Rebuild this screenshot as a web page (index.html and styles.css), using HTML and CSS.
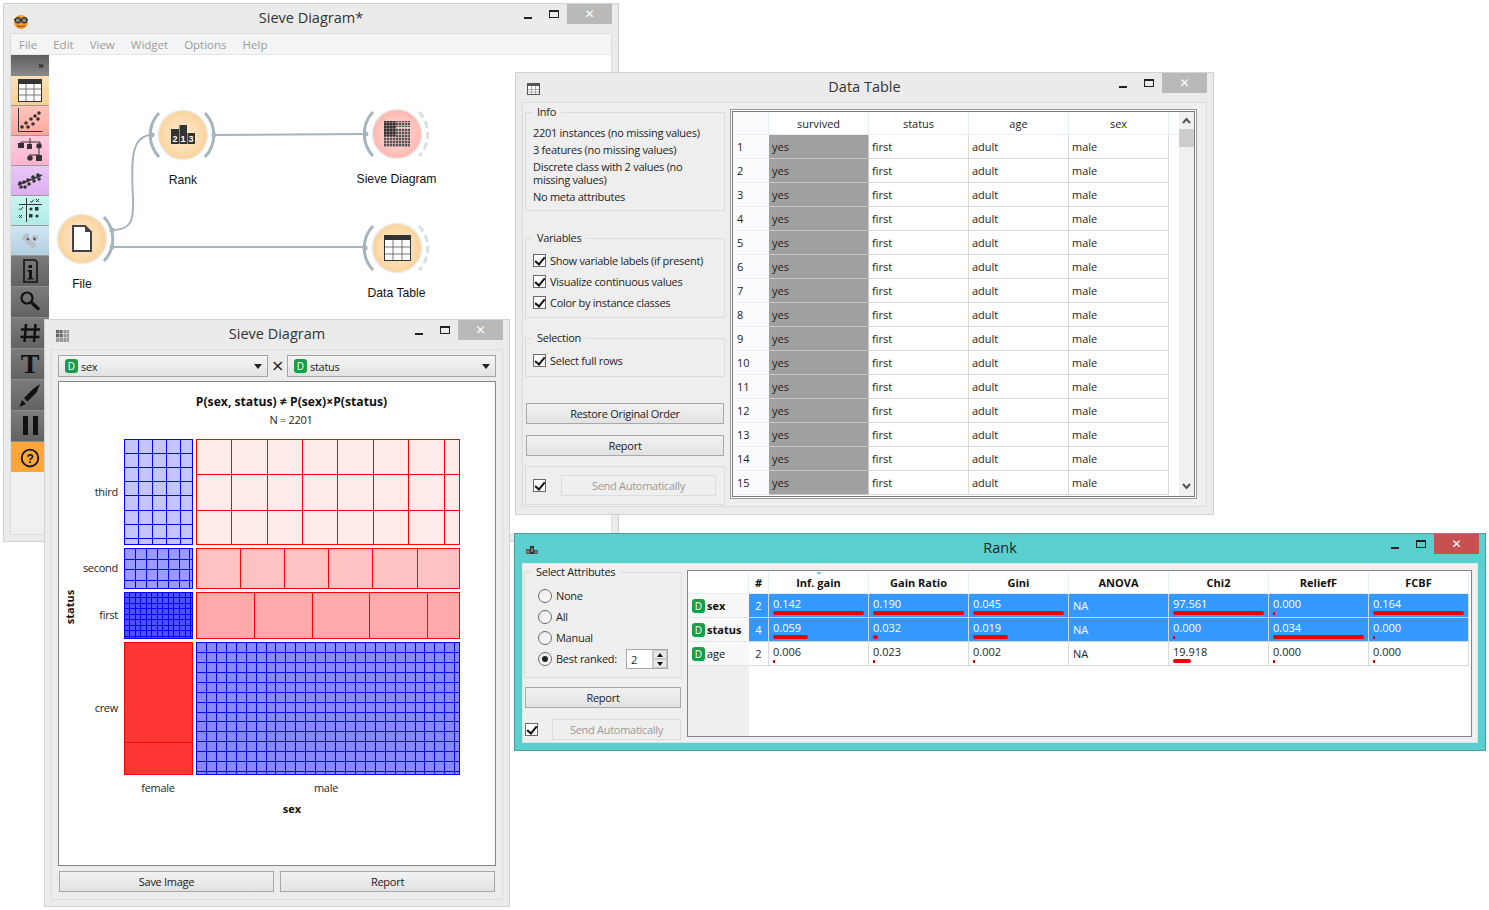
FILE: index.html
```html
<!DOCTYPE html>
<html lang="en">
<head>
<meta charset="utf-8">
<title>Sieve Diagram</title>
<link rel="stylesheet" href="styles.css">
</head>
<body>
<div class="desktop">

<!-- main canvas window -->
<section class="win win-main">
  <header class="titlebar">
    <div class="title-left">
      <svg class="face" width="16" height="15" viewBox="0 0 16 15"><circle cx="8" cy="8" r="7" fill="#f29a2e"/><path d="M4 11.500q4 2.500 8 0" stroke="#a84f0c" stroke-width="1.200" fill="none"/><path d="M1 5.500h14" stroke="#333" stroke-width="1.200"/><circle cx="4.800" cy="6.200" r="2.600" fill="#8a8a80" stroke="#333" stroke-width="1.200"/><circle cx="11.200" cy="6.200" r="2.600" fill="#8a8a80" stroke="#333" stroke-width="1.200"/></svg>
    </div>
    <h1 class="title">Sieve Diagram*</h1>
    <div class="controls"><span class="min"></span><span class="max"></span><span class="close">✕</span></div>
  </header>
  <div class="main-inner">
    <nav class="menubar"><span>File</span><span>Edit</span><span>View</span><span>Widget</span><span>Options</span><span>Help</span></nav>
    <div class="main-body">
      <aside class="toolbox">
        <div class="tool-head">»</div>
        <div class="tool t-data"><svg width="38" height="29" viewBox="0 0 38 29"><rect x="7.500" y="3.500" width="23" height="22" fill="#fff" stroke="#333"/><rect x="7" y="3" width="24" height="5" fill="#333"/><path d="M15 8v17M23 8v17M8 13h22M8 19h22" stroke="#777"/></svg></div>
        <div class="tool t-vis"><svg width="38" height="29" viewBox="0 0 38 29"><path d="M7.500 2v23.500h24" stroke="#333" fill="none"/><g fill="#333"><circle cx="11" cy="21" r="1.800"/><circle cx="15" cy="17" r="1.800"/><circle cx="17" cy="21" r="1.800"/><circle cx="20" cy="13" r="1.800"/><circle cx="22" cy="18" r="1.800"/><circle cx="24" cy="10" r="1.800"/><circle cx="27" cy="13" r="1.800"/><circle cx="28" cy="7" r="1.800"/></g></svg></div>
        <div class="tool t-model"><svg width="38" height="29" viewBox="0 0 38 29"><path d="M10 9V6h19v3M19 2v7M28 13v6h-10" stroke="#333" fill="none"/><g fill="#333"><rect x="7" y="7" width="6" height="5"/><rect x="16" y="8" width="5" height="5"/><circle cx="28" cy="10" r="2.700"/><circle cx="19" cy="22" r="2.700"/><rect x="25" y="19" width="6" height="6"/></g></svg></div>
        <div class="tool t-unsup"><svg width="38" height="29" viewBox="0 0 38 29"><path d="M7 19l24-10" stroke="#333" stroke-width="1.500"/><g fill="#333"><circle cx="9" cy="17" r="1.800"/><circle cx="10" cy="21" r="1.800"/><circle cx="14" cy="21" r="1.800"/><circle cx="13" cy="16" r="1.800"/><circle cx="17" cy="14" r="1.800"/><circle cx="18" cy="18" r="1.800"/><circle cx="22" cy="11" r="1.800"/><circle cx="23" cy="15" r="1.800"/><circle cx="27" cy="9" r="1.800"/><circle cx="28" cy="13" r="1.800"/></g></svg></div>
        <div class="tool t-eval"><svg width="38" height="29" viewBox="0 0 38 29"><path d="M8 8.500h23M15.500 2v24" stroke="#333"/><path d="M19 5l1.500 1.500L23 3.500M8 12.500l1.500 1.500 2.500-3" stroke="#333" fill="none"/><path d="M25 3l3 3M28 3l-3 3M8 19l3 3M11 19l-3 3" stroke="#333"/><g fill="#333"><circle cx="20" cy="13" r="1.600"/><rect x="24" y="11" width="3.500" height="3.500"/><rect x="18" y="18" width="3.500" height="3.500"/><circle cx="26" cy="20" r="1.600"/></g></svg></div>
        <div class="tool t-blur"><svg width="38" height="29" viewBox="0 0 38 29"><g fill="#b8c0c8"><circle cx="14" cy="12" r="3"/><circle cx="18" cy="16" r="3"/><circle cx="24" cy="12" r="3"/><circle cx="22" cy="19" r="3"/><circle cx="16" cy="9" r="2"/></g><path d="M15.500 13h3M17 11.500v3M22 13h3M23.500 11.500v3" stroke="#333" stroke-width=".8"/></svg></div>
        <div class="tool-dark"><svg width="38" height="30" viewBox="0 0 38 30"><path d="M13 4h11l2 2v20H13z" fill="none" stroke="#111" stroke-width="1.600"/><rect x="17.500" y="9" width="3.500" height="3" fill="#111"/><path d="M16.500 14h4.500v8h1.500v1.500h-6V22h1.500v-6.500h-1.500z" fill="#111"/></svg></div>
        <div class="tool-dark"><svg width="38" height="30" viewBox="0 0 38 30"><circle cx="16" cy="11" r="5.500" fill="none" stroke="#111" stroke-width="2.200"/><path d="M20.500 15.500l7.500 7" stroke="#111" stroke-width="3.200"/></svg></div>
        <div class="tool-dark"><svg width="38" height="30" viewBox="0 0 38 30"><path d="M15 6l-1.500 18M24.500 6l-1.500 18M10 11.500h19M9.500 19h19" stroke="#111" stroke-width="2.500" fill="none"/></svg></div>
        <div class="tool-dark tool-t">T</div>
        <div class="tool-dark"><svg width="38" height="30" viewBox="0 0 38 30"><path d="M29 4l-7 5-9 9 3.500 3.500 9-9zM11 20l-2.500 7 6.500-3z" fill="#111"/></svg></div>
        <div class="tool-dark"><svg width="38" height="30" viewBox="0 0 38 30"><rect x="12" y="5" width="5" height="19" fill="#111"/><rect x="22" y="5" width="5" height="19" fill="#111"/></svg></div>
        <div class="tool-help"><svg width="38" height="30" viewBox="0 0 38 30"><circle cx="19" cy="16" r="8.300" fill="none" stroke="#111" stroke-width="1.800"/><text class="help-q" x="19" y="20.500">?</text></svg></div>
      </aside>
      <div class="canvas">
        <svg class="scheme" width="562" height="480" viewBox="49 55 562 480">
          <defs>
            <radialGradient id="orange"><stop offset="0" stop-color="#fde8cc"/><stop offset=".7" stop-color="#fcdcb0"/><stop offset="1" stop-color="#fbd39c"/></radialGradient>
            <radialGradient id="pink"><stop offset="0" stop-color="#ffd2cc"/><stop offset=".7" stop-color="#ffc6c0"/><stop offset="1" stop-color="#ffb8b2"/></radialGradient>
            <pattern id="sv" width="3" height="3" patternUnits="userSpaceOnUse"><rect width="2.400" height="2.400" fill="#555"/></pattern>
            <pattern id="svd" width="3" height="3" patternUnits="userSpaceOnUse"><rect width="2.600" height="2.600" fill="#333"/></pattern>
          </defs>
          <g class="link">
            <path d="M112 230C130 230 134 222 133 200 132 170 128 135 152 135"/>
            <path d="M112 247H365"/>
            <path d="M214 135 366 134"/>
          </g>
          <g class="halo"><circle cx="183" cy="135" r="25.500"/><circle cx="397" cy="134" r="25.500"/><circle cx="397" cy="248" r="25.500"/><circle cx="82" cy="239" r="25.500"/></g>
          <circle cx="183" cy="135" r="24" fill="url(#orange)"/>
          <circle cx="82" cy="239" r="24" fill="url(#orange)"/>
          <circle cx="397" cy="134" r="24" fill="url(#pink)"/>
          <circle cx="397" cy="248" r="24" fill="url(#orange)"/>
          <g class="arc">
            <path d="M159 113A32 32 0 0 0 159 157"/><path d="M205 113A32 32 0 0 1 205 157"/>
            <path d="M104 217A32 32 0 0 1 104 261"/>
            <path d="M373 112A32 32 0 0 0 373 156"/>
            <path d="M373 226A32 32 0 0 0 373 270"/>
          </g>
          <g class="arc-open">
            <path d="M419 112A32 32 0 0 1 419 156"/>
            <path d="M419 226A32 32 0 0 1 419 270"/>
          </g>
          <g class="anchor"><circle cx="112" cy="230" r="2.500"/><circle cx="112" cy="247" r="2.500"/><circle cx="152" cy="135" r="2.500"/><circle cx="214" cy="135" r="2.500"/><circle cx="366" cy="134" r="2.500"/><circle cx="365" cy="248" r="2.500"/></g>
          <!-- rank icon -->
          <rect x="171" y="129" width="8" height="15" fill="#333"/><rect x="179.500" y="125" width="7.500" height="19" fill="#333"/><rect x="187.500" y="133" width="7.500" height="11" fill="#333"/>
          <text class="rank-n" x="175" y="142">2</text><text class="rank-n" x="183" y="142">1</text><text class="rank-n" x="191" y="142">3</text>
          <!-- file icon -->
          <path d="M73 226H85L91 232V251H73Z" fill="#fff" stroke="#444" stroke-width="2"/><path d="M85 226V232H91Z" fill="#444"/>
          <!-- sieve icon -->
          <rect x="384" y="121" width="26" height="26" fill="url(#sv)"/><rect x="384" y="121" width="12" height="15" fill="url(#svd)"/><rect x="396" y="127" width="14" height="1.500" fill="#ffc6c0"/>
          <!-- table icon -->
          <rect x="384.500" y="235.500" width="26" height="25" fill="#fff" stroke="#333"/><rect x="384" y="235" width="27" height="5" fill="#333"/><path d="M393 240v20M402 240v20M385 247h25M385 254h25" stroke="#777"/>
          <text class="node-label" x="183" y="184">Rank</text>
          <text class="node-label" x="82" y="288">File</text>
          <text class="node-label" x="396.500" y="183">Sieve Diagram</text>
          <text class="node-label" x="396.500" y="297">Data Table</text>
        </svg>
      </div>
    </div>
  </div>
</section>

<!-- sieve widget -->
<section class="win win-sieve">
  <header class="titlebar">
    <div class="title-left"><svg class="ticon" width="13" height="12" viewBox="0 0 13 12"><rect width="13" height="12" fill="#999"/><rect width="6" height="7" fill="#666"/><path d="M0 3.500h13M0 7.500h13M3.500 0v12M7.500 0v12M10.500 0v12" stroke="#ddd" stroke-width=".6"/></svg></div>
    <h2 class="title">Sieve Diagram</h2>
    <div class="controls"><span class="min"></span><span class="max"></span><span class="close">✕</span></div>
  </header>
  <div class="sieve-inner">
    <div class="combo-row">
      <div class="combo"><span class="badge">D</span><span>sex</span><i class="caret"></i></div>
      <span class="times">×</span>
      <div class="combo"><span class="badge">D</span><span>status</span><i class="caret"></i></div>
    </div>
    <div class="plot">
      <svg width="436" height="483" viewBox="59 382 436 483" shape-rendering="crispEdges">
        <g class="blue">
          <rect class="c1" x="124.500" y="439.500" width="68" height="105"/>
          <path d="M138.500 439.500v105M152.500 439.500v105M166.500 439.500v105M180.500 439.500v105M124.500 453.500h68M124.500 467.500h68M124.500 481.500h68M124.500 495.500h68M124.500 510.500h68M124.500 524.500h68M124.500 538.500h68"/>
          <rect class="c2" x="124.500" y="548.500" width="68" height="40"/>
          <path d="M135.500 548.500v40M146.500 548.500v40M157.500 548.500v40M168.500 548.500v40M179.500 548.500v40M189.500 548.500v40M124.500 559.500h68M124.500 569.500h68M124.500 580.500h68"/>
          <rect class="c3" x="124.500" y="592.500" width="68" height="46"/>
          <path d="M129.500 592.500v46M135.500 592.500v46M140.500 592.500v46M146.500 592.500v46M151.500 592.500v46M157.500 592.500v46M162.500 592.500v46M168.500 592.500v46M173.500 592.500v46M179.500 592.500v46M185.500 592.500v46M190.500 592.500v46M124.500 597.500h68M124.500 603.500h68M124.500 608.500h68M124.500 614.500h68M124.500 619.500h68M124.500 625.500h68M124.500 630.500h68M124.500 636.500h68"/>
          <rect class="c4" x="196.500" y="642.500" width="263" height="132"/>
          <path d="M206.500 642.500v132M216.500 642.500v132M226.500 642.500v132M236.500 642.500v132M246.500 642.500v132M256.500 642.500v132M266.500 642.500v132M275.500 642.500v132M285.500 642.500v132M295.500 642.500v132M305.500 642.500v132M315.500 642.500v132M325.500 642.500v132M335.500 642.500v132M345.500 642.500v132M355.500 642.500v132M365.500 642.500v132M375.500 642.500v132M385.500 642.500v132M395.500 642.500v132M405.500 642.500v132M415.500 642.500v132M424.500 642.500v132M434.500 642.500v132M444.500 642.500v132M454.500 642.500v132"/>
          <path d="M196.500 652.500h263M196.500 662.500h263M196.500 672.500h263M196.500 682.500h263M196.500 692.500h263M196.500 702.500h263M196.500 712.500h263M196.500 721.500h263M196.500 731.500h263M196.500 741.500h263M196.500 751.500h263M196.500 761.500h263M196.500 771.500h263"/>
        </g>
        <g class="red">
          <rect class="r1" x="196.500" y="439.500" width="263" height="105"/>
          <path d="M231.500 439.500v105M267.500 439.500v105M302.500 439.500v105M337.500 439.500v105M373.500 439.500v105M408.500 439.500v105M444.500 439.500v105M196.500 474.500h263M196.500 510.500h263"/>
          <rect class="r2" x="196.500" y="548.500" width="263" height="40"/>
          <path d="M240.500 548.500v40M284.500 548.500v40M328.500 548.500v40M372.500 548.500v40M417.500 548.500v40"/>
          <rect class="r3" x="196.500" y="592.500" width="263" height="46"/>
          <path d="M254.500 592.500v46M312.500 592.500v46M369.500 592.500v46M427.500 592.500v46"/>
          <rect class="r4" x="124.500" y="642.500" width="68" height="132"/>
          <path d="M124.500 742.500h68"/>
        </g>
        <g class="plot-text" shape-rendering="auto">
          <text class="plot-title" x="291.500" y="406">P(sex, status) ≠ P(sex)×P(status)</text>
          <text class="mid" x="291" y="424">N = 2201</text>
          <text class="end" x="118" y="496">third</text>
          <text class="end" x="118" y="572">second</text>
          <text class="end" x="118" y="619">first</text>
          <text class="end" x="118" y="712">crew</text>
          <text class="mid" x="158" y="792">female</text>
          <text class="mid" x="326" y="792">male</text>
          <text class="axis" x="292" y="813">sex</text>
          <text class="axis" transform="translate(74 607) rotate(-90)">status</text>
        </g>
      </svg>
    </div>
    <div class="btn-row"><button class="btn">Save Image</button><button class="btn">Report</button></div>
  </div>
</section>

<!-- data table widget -->
<section class="win win-data">
  <header class="titlebar">
    <div class="title-left"><svg class="ticon" width="13" height="12" viewBox="0 0 13 12"><rect x=".5" y=".5" width="12" height="11" fill="#fff" stroke="#555"/><rect width="13" height="3" fill="#555"/><path d="M4.500 3v8M8.500 3v8M1 6.500h11M1 9h11" stroke="#aaa"/></svg></div>
    <h2 class="title">Data Table</h2>
    <div class="controls"><span class="min"></span><span class="max"></span><span class="close">✕</span></div>
  </header>
  <div class="data-inner">
    <div class="side">
      <fieldset class="box box-info">
        <legend>Info</legend>
        <p>2201 instances (no missing values)</p>
        <p>3 features (no missing values)</p>
        <p>Discrete class with 2 values (no missing values)</p>
        <p>No meta attributes</p>
      </fieldset>
      <fieldset class="box box-vars">
        <legend>Variables</legend>
        <label class="check"><i class="cb"></i>Show variable labels (if present)</label>
        <label class="check"><i class="cb"></i>Visualize continuous values</label>
        <label class="check"><i class="cb"></i>Color by instance classes</label>
      </fieldset>
      <fieldset class="box box-sel">
        <legend>Selection</legend>
        <label class="check"><i class="cb"></i>Select full rows</label>
      </fieldset>
      <button class="btn btn-restore">Restore Original Order</button>
      <button class="btn btn-report">Report</button>
      <div class="autosend"><i class="cb"></i><button class="btn-off">Send Automatically</button></div>
    </div>
    <div class="frame">
      <div class="frame-in">
        <table class="dt">
          <thead><tr><th class="rh"></th><th>survived</th><th>status</th><th>age</th><th>sex</th><th class="fill"></th></tr></thead>
          <tbody>
            <tr><td class="rh">1</td><td class="yes">yes</td><td>first</td><td>adult</td><td>male</td><td class="fill"></td></tr>
            <tr><td class="rh">2</td><td class="yes">yes</td><td>first</td><td>adult</td><td>male</td><td class="fill"></td></tr>
            <tr><td class="rh">3</td><td class="yes">yes</td><td>first</td><td>adult</td><td>male</td><td class="fill"></td></tr>
            <tr><td class="rh">4</td><td class="yes">yes</td><td>first</td><td>adult</td><td>male</td><td class="fill"></td></tr>
            <tr><td class="rh">5</td><td class="yes">yes</td><td>first</td><td>adult</td><td>male</td><td class="fill"></td></tr>
            <tr><td class="rh">6</td><td class="yes">yes</td><td>first</td><td>adult</td><td>male</td><td class="fill"></td></tr>
            <tr><td class="rh">7</td><td class="yes">yes</td><td>first</td><td>adult</td><td>male</td><td class="fill"></td></tr>
            <tr><td class="rh">8</td><td class="yes">yes</td><td>first</td><td>adult</td><td>male</td><td class="fill"></td></tr>
            <tr><td class="rh">9</td><td class="yes">yes</td><td>first</td><td>adult</td><td>male</td><td class="fill"></td></tr>
            <tr><td class="rh">10</td><td class="yes">yes</td><td>first</td><td>adult</td><td>male</td><td class="fill"></td></tr>
            <tr><td class="rh">11</td><td class="yes">yes</td><td>first</td><td>adult</td><td>male</td><td class="fill"></td></tr>
            <tr><td class="rh">12</td><td class="yes">yes</td><td>first</td><td>adult</td><td>male</td><td class="fill"></td></tr>
            <tr><td class="rh">13</td><td class="yes">yes</td><td>first</td><td>adult</td><td>male</td><td class="fill"></td></tr>
            <tr><td class="rh">14</td><td class="yes">yes</td><td>first</td><td>adult</td><td>male</td><td class="fill"></td></tr>
            <tr><td class="rh">15</td><td class="yes">yes</td><td>first</td><td>adult</td><td>male</td><td class="fill"></td></tr>
          </tbody>
        </table>
        <div class="scroll">
          <svg class="sc-arrow" width="15" height="17" viewBox="0 0 15 17"><path d="M4 11l3.500-4 3.500 4" fill="none" stroke="#555" stroke-width="2"/></svg>
          <div class="sc-thumb"></div>
          <svg class="sc-arrow sc-down" width="15" height="17" viewBox="0 0 15 17"><path d="M4 7l3.500 4 3.500-4" fill="none" stroke="#555" stroke-width="2"/></svg>
        </div>
      </div>
    </div>
  </div>
</section>

<!-- rank widget -->
<section class="win win-rank">
  <header class="titlebar">
    <div class="title-left"><svg class="ticon" width="12" height="8" viewBox="0 0 12 8"><rect y="3" width="4" height="5" fill="#555"/><rect x="4" width="4" height="8" fill="#333"/><rect x="8" y="4" width="4" height="4" fill="#555"/><path d="M2 4.500v2M6 2v4M10 5.500v1.500" stroke="#ccc"/></svg></div>
    <h2 class="title">Rank</h2>
    <div class="controls"><span class="min"></span><span class="max"></span><span class="close">✕</span></div>
  </header>
  <div class="rank-inner">
    <div class="rank-side">
      <fieldset class="box box-attrs">
        <legend>Select Attributes</legend>
        <label class="radio"><i class="rb"></i>None</label>
        <label class="radio"><i class="rb"></i>All</label>
        <label class="radio"><i class="rb"></i>Manual</label>
        <div class="radio"><i class="rb on"></i>Best ranked:<span class="spin"><span class="spin-v">2</span><span class="spin-b"><b class="up"></b><b class="down"></b></span></span></div>
      </fieldset>
      <button class="btn btn-rank">Report</button>
      <div class="rank-auto"><i class="cb"></i><button class="btn-off">Send Automatically</button></div>
    </div>
    <div class="rank-table">
      <table class="rt">
        <thead>
          <tr><th class="rh"></th><th class="num">#</th><th class="sorted">Inf. gain</th><th>Gain Ratio</th><th>Gini</th><th>ANOVA</th><th>Chi2</th><th>ReliefF</th><th>FCBF</th><th class="tail"></th></tr>
        </thead>
        <tbody>
          <tr class="sel">
            <td class="rh"><span class="badge">D</span><b>sex</b></td><td class="num">2</td>
            <td>0.142<i class="bar"></i></td><td>0.190<i class="bar"></i></td><td>0.045<i class="bar"></i></td><td class="na">NA</td><td>97.561<i class="bar"></i></td><td>0.000<i class="bar tiny"></i></td><td>0.164<i class="bar"></i></td><td class="tail"></td>
          </tr>
          <tr class="sel">
            <td class="rh"><span class="badge">D</span><b>status</b></td><td class="num">4</td>
            <td>0.059<i class="bar" style="width:35px"></i></td><td>0.032<i class="bar" style="width:5px"></i></td><td>0.019<i class="bar" style="width:35px"></i></td><td class="na">NA</td><td>0.000<i class="bar tiny"></i></td><td>0.034<i class="bar"></i></td><td>0.000<i class="bar tiny"></i></td><td class="tail"></td>
          </tr>
          <tr>
            <td class="rh"><span class="badge">D</span>age</td><td class="num">2</td>
            <td>0.006<i class="bar tiny"></i></td><td>0.023<i class="bar tiny"></i></td><td>0.002<i class="bar tiny"></i></td><td class="na">NA</td><td>19.918<i class="bar" style="width:18px"></i></td><td>0.000<i class="bar tiny"></i></td><td>0.000<i class="bar tiny"></i></td><td class="tail"></td>
          </tr>
          <tr class="empty"><td class="rh"></td><td colspan="9"></td></tr>
        </tbody>
      </table>
    </div>
  </div>
</section>

</div>
</body>
</html>
```
FILE: styles.css
```css
* { box-sizing: border-box; }
html, body { margin: 0; padding: 0; background: #fff; }
body { font: 11px/13px "Open Sans", "Liberation Sans", sans-serif; letter-spacing: -.28px; color: #1e1e1e; }
.desktop { position: relative; width: 1489px; height: 910px; overflow: hidden; }

/* windows */
.win { position: absolute; display: flex; flex-direction: column; background: #ebebeb; border: 1px solid #d2d2d2; }
.win-main { left: 3px; top: 3px; width: 616px; height: 539px; }
.win-sieve { left: 44px; top: 319px; width: 466px; height: 588px; }
.win-data { left: 515px; top: 72px; width: 699px; height: 443px; }
.win-rank { left: 514px; top: 533px; width: 972px; height: 218px; background: #5bcfcf; border-color: #4d9c9c; }

.titlebar { flex: none; height: 29px; display: grid; grid-template-columns: 1fr auto 1fr; align-items: start; }
.title-left { padding: 6px 0 0 6px; height: 29px; display: flex; align-items: center; }
.title { margin: 0; font-size: 14.500px; line-height: 28px; font-weight: 400; letter-spacing: 0; color: #333; }
.win-rank .title { color: #222; }
.controls { display: flex; justify-content: flex-end; align-items: flex-start; }
.min { width: 8px; height: 2px; margin: 13px 17px 0 0; background: #222; }
.max { width: 10px; height: 8px; margin: 6px 8px 0 0; border: 1px solid #222; border-top-width: 2px; }
.close { width: 45px; height: 20px; margin-right: 6px; background: #b9b9b9; color: #fff; font: 700 12px/20px "DejaVu Sans", sans-serif; letter-spacing: 0; text-align: center; }
.win-rank .close { background: #c75050; }
.face { margin-left: 3px; margin-top: -1px; }
.ticon { margin-left: 5px; margin-top: -3px; }

/* main window */
.main-inner { flex: 1; margin: 0 6px 6px; display: flex; flex-direction: column; background: #f0f0f0; border: 1px solid #dcdcdc; min-height: 0; }
.menubar { flex: none; height: 21px; display: flex; gap: 16px; align-items: center; padding-left: 8px; background: #f4f5f7; border-bottom: 1px solid #e4e4e4; color: #9b9b9b; font-size: 11.500px; letter-spacing: 0; }
.main-body { flex: 1; display: flex; min-height: 0; }
.toolbox { flex: none; width: 38px; background: #f0f0f0; }
.tool-head { height: 21px; background: linear-gradient(#5e5e5e, #8a8a8a); color: #222; font: 700 10px/21px "DejaVu Sans", sans-serif; text-align: right; padding-right: 5px; }
.tool { height: 30px; border-bottom: 1px solid #9a9a9a; }
.tool svg, .tool-dark svg, .tool-help svg { display: block; }
.t-data { background: linear-gradient(#fce0b8, #fbcf90); }
.t-vis { background: linear-gradient(#ffc4bc, #ffa89e); }
.t-model { background: linear-gradient(#ffcce0, #fdb4cf); }
.t-unsup { background: linear-gradient(#e8c8f8, #dcaef0); }
.t-eval { background: linear-gradient(#c8f6f0, #b0ece6); }
.t-blur { background: linear-gradient(#cfe6f2, #b4cfe0); }
.tool-dark { height: 31px; background: linear-gradient(#7c7c7c, #626262); border-bottom: 1px solid #8c8c8c; }
.tool-t { font: 700 28px/30px "Liberation Serif", serif; color: #111; text-align: center; }
.tool-help { height: 30px; background: #ffa639; }
.help-q { font: 700 12px "Liberation Sans", sans-serif; text-anchor: middle; fill: #111; }
.canvas { flex: 1; background: #fff; min-width: 0; }
.scheme { display: block; }
.link path { fill: none; stroke: #a5b5bc; stroke-width: 2; }
.halo circle { fill: #e8eef0; }
.arc path { fill: none; stroke: #a5b5bc; stroke-width: 3; }
.arc-open path { fill: none; stroke: #d7e0e2; stroke-width: 3; stroke-dasharray: 7 4; }
.anchor circle { fill: #a5b5bc; }
.node-label { font: 12.200px "Liberation Sans", sans-serif; letter-spacing: 0; text-anchor: middle; fill: #111; }
.rank-n { font: 700 9px "Liberation Sans", sans-serif; letter-spacing: 0; text-anchor: middle; fill: #fff; }

/* shared controls */
.btn { display: block; height: 21px; padding: 0; font: inherit; letter-spacing: inherit; color: #222; border: 1px solid #a8a8a8; background: linear-gradient(#f2f2f2, #e2e2e2); }
.btn-off { display: block; height: 21px; padding: 0; font: inherit; letter-spacing: inherit; color: #9a9a9a; border: 1px solid #dcdcdc; background: #efefef; }
.badge { display: inline-block; flex: none; width: 13px; height: 14px; margin-right: 3px; border-radius: 3px; background: #1c9b48; color: #fff; font-size: 10px; line-height: 14px; letter-spacing: 0; text-align: center; font-weight: 400; }
.box { margin: 0; min-width: 0; padding: 0; border: 1px solid #dcdcdc; }
.box legend { margin-left: 6px; padding: 0 5px; line-height: 14px; color: #222; }
.cb { position: relative; display: block; flex: none; width: 13px; height: 13px; background: #fff; border: 1px solid #6a6a6a; }
.cb::after { content: ""; position: absolute; left: 3px; top: 0; width: 4px; height: 8px; border: solid #111; border-width: 0 2px 2px 0; transform: rotate(40deg); }
.check { display: flex; align-items: center; gap: 4px; height: 21px; padding-left: 7px; }

/* sieve widget */
.sieve-inner { flex: 1; margin: 0 6px 6px; padding: 5px 7px 0 6px; background: #ececec; border: 1px solid #dedede; display: flex; flex-direction: column; min-height: 0; }
.combo-row { flex: none; display: flex; align-items: center; height: 22px; }
.combo { position: relative; flex: none; display: flex; align-items: center; width: 210px; height: 22px; padding-left: 6px; border: 1px solid #a4a4a4; background: linear-gradient(#f5f5f5, #e2e2e2); }
.combo + .times + .combo { width: 209px; }
.caret { margin-left: auto; margin-right: 5px; border: 4px solid transparent; border-top: 5px solid #222; border-bottom: 0; }
.times { flex: none; width: 19px; text-align: center; font: 16px/22px "DejaVu Sans", sans-serif; }
.plot { flex: none; width: 438px; height: 485px; margin-top: 4px; background: #fff; border: 1px solid #85858c; }
.plot svg { display: block; }
.blue rect, .blue path { stroke: #0000ff; stroke-width: 1; fill: none; }
.red rect, .red path { stroke: #ff0000; stroke-width: 1; fill: none; }
.blue .c1 { fill: #c4c4ff; }
.blue .c2 { fill: #9a9aff; }
.blue .c3 { fill: #5050ff; }
.blue .c4 { fill: #8888ff; }
.red .r1 { fill: #ffeaea; }
.red .r2 { fill: #ffc2c2; }
.red .r3 { fill: #ffaaaa; }
.red .r4 { fill: #ff3636; }
.plot-text text { font-size: 11px; fill: #1e1e1e; }
.plot-text .mid { text-anchor: middle; }
.plot-text .end { text-anchor: end; }
.plot-text .plot-title { text-anchor: middle; font-size: 12.200px; letter-spacing: 0; font-weight: 700; fill: #111; }
.plot-text .axis { text-anchor: middle; letter-spacing: 0; font-weight: 700; fill: #111; }
.btn-row { flex: none; display: flex; gap: 6px; margin: 5px 0 0 1px; }
.btn-row .btn { width: 215px; }

/* data widget */
.data-inner { flex: 1; margin: 0 6px 7px; background: #eeeeee; border: 1px solid #dcdcdc; display: flex; min-height: 0; }
.side { flex: none; width: 200px; margin-left: 2px; padding-top: 2px; }
.box p { margin: 0 0 4px; padding: 0 7px; }
.box-info { height: 106px; padding-top: 7px; }
.box-vars { height: 87px; margin-top: 20px; padding-top: 5px; }
.box-sel { height: 46px; margin-top: 13px; padding-top: 5px; }
.side .btn { width: 198px; margin-left: 1px; }
.btn-restore { margin-top: 26px; }
.btn-report { margin-top: 11px; }
.autosend { display: flex; align-items: center; height: 39px; margin-top: 10px; padding-left: 7px; border: 1px solid #dcdcdc; }
.autosend .btn-off { width: 155px; margin-left: 15px; }
.frame { flex: none; width: 467px; height: 390px; margin: 6px 0 0 5px; padding: 1px; background: #fff; border: 1px solid #9a9a9a; }
.frame-in { display: flex; height: 100%; background: #fff; border: 1px solid #7c7c7c; overflow: hidden; }
.dt { flex: none; width: 446px; height: 383px; table-layout: fixed; border-collapse: separate; border-spacing: 0; letter-spacing: 0; }
.dt th { height: 23px; padding: 0; font-weight: 400; text-align: center; background: #fff; border-right: 1px solid #e6effa; border-bottom: 1px solid #e6effa; }
.dt .rh { width: 36px; background: #fbfbfd; }
.dt th:nth-child(n+2):nth-child(-n+5), .dt td:nth-child(n+2):nth-child(-n+5) { width: 100px; }
.dt td { height: 24px; padding: 0 0 0 3px; border-right: 1px solid #d9d9d9; border-bottom: 1px solid #d9d9d9; white-space: nowrap; }
.dt td.rh { padding-left: 4px; border-right: 0; border-bottom: 1px solid #e6effa; }
.dt td.yes { background: #a0a0a0; border-color: #c8c8c8; }
.dt .fill { border: 0; }
.dt th.fill { border-bottom: 1px solid #e6effa; border-right: 0; }
.scroll { flex: none; width: 15px; display: flex; flex-direction: column; background: #f0f0f0; }
.sc-arrow { flex: none; display: block; }
.sc-thumb { flex: none; width: 15px; height: 18px; background: #cdcdcd; }
.sc-down { margin-top: auto; margin-bottom: 2px; }

/* rank widget */
.rank-inner { flex: 1; margin: 0 7px 7px; background: #efefef; border: 1px solid #d8e6e6; display: flex; min-height: 0; }
.rank-side { flex: none; width: 160px; padding-left: 1px; }
.box-attrs { width: 158px; height: 113px; margin-top: 1px; padding-top: 6px; }
.radio { display: flex; align-items: center; height: 21px; padding-left: 13px; }
.rb { position: relative; display: block; flex: none; width: 14px; height: 14px; margin-right: 4px; border: 1px solid #6a6a6a; border-radius: 50%; background: linear-gradient(135deg, #e8e8e8, #fff); }
.rb.on::after { content: ""; position: absolute; left: 3px; top: 3px; width: 6px; height: 6px; border-radius: 50%; background: #222; }
.spin { display: flex; width: 42px; height: 20px; margin-left: 9px; background: #fff; border: 1px solid #a8a8a8; }
.spin-v { flex: 1; padding-left: 4px; line-height: 20px; }
.spin-b { flex: none; width: 15px; display: flex; flex-direction: column; border-left: 1px solid #c8c8c8; }
.spin-b b { position: relative; flex: 1; background: #e8e8e8; border: 1px solid #c8c8c8; }
.spin-b .up::after { content: ""; position: absolute; left: 3px; top: 2px; border: 3px solid transparent; border-top: 0; border-bottom: 4px solid #111; }
.spin-b .down::after { content: ""; position: absolute; left: 3px; top: 2px; border: 3px solid transparent; border-bottom: 0; border-top: 4px solid #111; }
.btn-rank { width: 156px; margin-top: 9px; margin-left: 1px; }
.rank-auto { display: flex; align-items: center; height: 21px; margin: 11px 0 0 1px; }
.rank-auto .btn-off { width: 129px; margin-left: 14px; }
.rank-table { flex: none; width: 785px; height: 167px; margin: 6px 0 0 4px; border: 1px solid #85858c; background: #fff; overflow: hidden; }
.rt { width: 783px; height: 165px; table-layout: fixed; border-collapse: separate; border-spacing: 0; letter-spacing: 0; }
.rt th { height: 23px; padding: 0; font-weight: 700; text-align: center; color: #111; background: #fff; border-right: 1px solid #e6effa; border-bottom: 1px solid #e6effa; width: 100px; position: relative; }
.rt th.rh { width: 61px; background: #fff; }
.rt th.num { width: 20px; }
.rt th.tail { width: 2px; border-right: 0; }
.rt td { position: relative; height: 24px; padding: 3px 0 0 4px; vertical-align: top; background: #fff; border-right: 1px solid #d9d9d9; border-bottom: 1px solid #d9d9d9; white-space: nowrap; }
.rt td.na { padding-top: 5px; }
.rt td.num { padding: 5px 0 0; text-align: center; }
.rt td.rh { padding: 5px 0 0 4px; background: #f8f8f8; border-right: 0; border-bottom: 1px solid #e6e6e6; display: flex; align-items: flex-start; color: #111; }
.rt td.rh .badge { margin-right: 2px; }
.rt td.tail { border: 0; background: #fff; }
.rt tr.sel td:not(.rh):not(.tail) { background: #3399ff; color: #fff; border-color: #c8d8e8; }
.rt .empty td { height: auto; padding: 0; border: 0; background: #fff; }
.rt .empty td.rh { display: table-cell; background: #efefef; border: 0; }
.bar { position: absolute; left: 4px; bottom: 2px; width: 91px; height: 4px; border-radius: 2px; background: #f00008; }
.bar.tiny { width: 2px; height: 3px; border-radius: 0; }
.sorted::after { content: ""; position: absolute; left: 50%; top: 1px; margin-left: -3px; border: 3px solid transparent; border-top: 3px solid #8cc4e8; border-bottom: 0; }
```
